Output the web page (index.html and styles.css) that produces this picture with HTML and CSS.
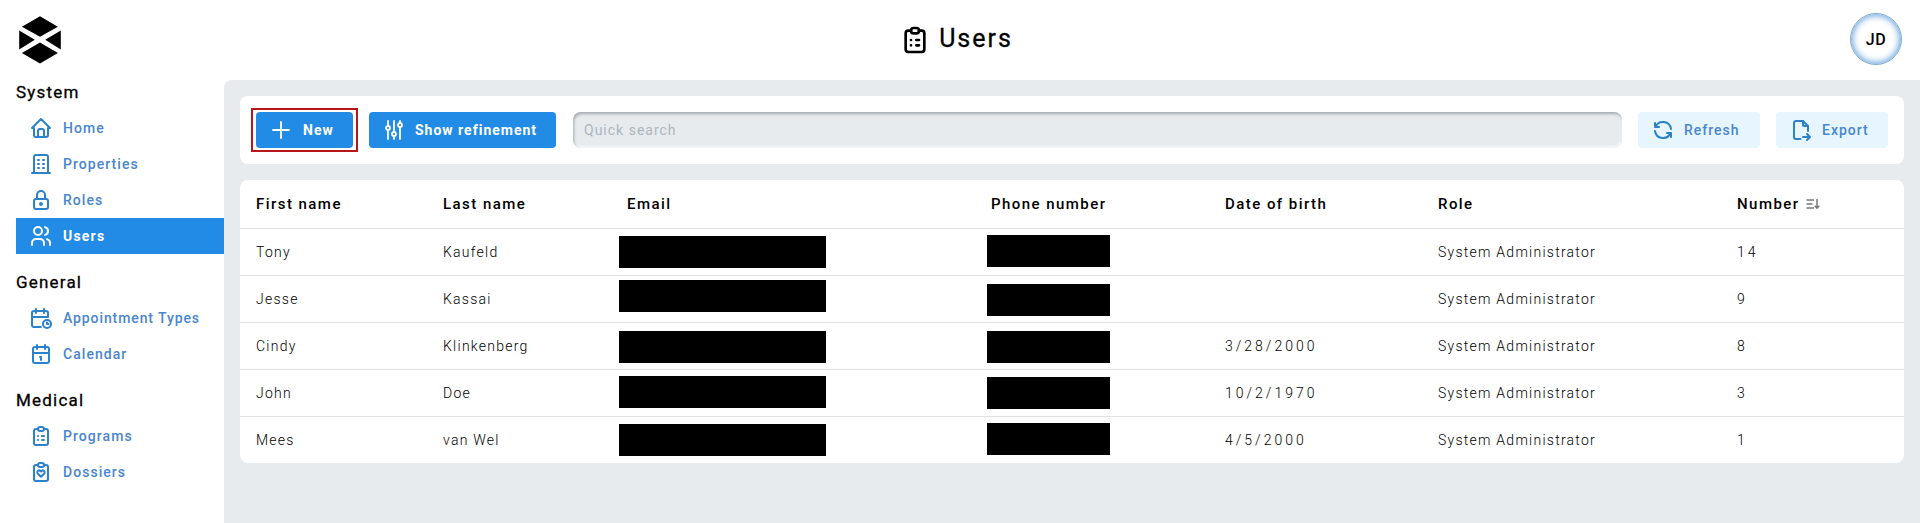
FILE: index.html
```html
<!DOCTYPE html>
<html lang="en">
<head>
<meta charset="utf-8">
<title>Users</title>
<link rel="stylesheet" href="styles.css">
</head>
<body>
<svg class="sprite" aria-hidden="true">
  <symbol id="clipboard" viewBox="0 0 24 24"><path d="M9 5H7a2 2 0 0 0-2 2v12a2 2 0 0 0 2 2h10a2 2 0 0 0 2-2V7a2 2 0 0 0-2-2h-2"/><rect x="9" y="3" width="6" height="4" rx="2"/></symbol>
</svg>
<header class="topbar">
  <svg class="logo" viewBox="0 0 42 48"><path d="M21 .3 38.900 10.700 21 20.800 2.900 10.700ZM21 26.500 38.900 37 21 47.500 2.900 37ZM.2 14.500 15.800 23.700 .2 33.500ZM41.800 14.500 26.200 23.700 41.800 33.500Z"/></svg>
  <h1 class="page-title">
    <svg class="icon icon-lg" viewBox="0 0 24 24"><use href="#clipboard"/><path d="M9 12h.01M13 12h2M9 16h.01M13 16h2"/></svg>
    <span>Users</span>
  </h1>
  <div class="avatar">JD</div>
</header>
<div class="shell">
  <nav class="sidebar">
    <section class="group">
      <h2 class="group-title">System</h2>
      <a class="item"><svg class="icon" viewBox="0 0 24 24"><path d="M5 12H3l9-9 9 9h-2M5 12v7a2 2 0 0 0 2 2h10a2 2 0 0 0 2-2v-7"/><path d="M9 21v-6a2 2 0 0 1 2-2h2a2 2 0 0 1 2 2v6"/></svg><span>Home</span></a>
      <a class="item"><svg class="icon" viewBox="0 0 24 24"><path d="M3 21h18M5 21V5a2 2 0 0 1 2-2h10a2 2 0 0 1 2 2v16M9 8h1M9 12h1M9 16h1M14 8h1M14 12h1M14 16h1"/></svg><span>Properties</span></a>
      <a class="item"><svg class="icon" viewBox="0 0 24 24"><rect x="5" y="11" width="14" height="10" rx="2"/><circle cx="12" cy="16" r="1"/><path d="M8 11V7a4 4 0 0 1 8 0v4"/></svg><span>Roles</span></a>
      <a class="item active"><svg class="icon" viewBox="0 0 24 24"><circle cx="9" cy="7" r="4"/><path d="M3 21v-2a4 4 0 0 1 4-4h4a4 4 0 0 1 4 4v2M16 3.130a4 4 0 0 1 0 7.750M21 21v-2a4 4 0 0 0-3-3.850"/></svg><span>Users</span></a>
    </section>
    <section class="group">
      <h2 class="group-title">General</h2>
      <a class="item wide"><svg class="icon" viewBox="0 0 24 24"><path d="M11.800 21H5a2 2 0 0 1-2-2V7a2 2 0 0 1 2-2h12a2 2 0 0 1 2 2v4M15 3v4M7 3v4M3 11h16"/><circle cx="18" cy="18" r="4"/><path d="M18 16.500V18h1.500"/></svg><span>Appointment Types</span></a>
      <a class="item"><svg class="icon" viewBox="0 0 24 24"><rect x="4" y="5" width="16" height="16" rx="2"/><path d="M16 3v4M8 3v4M4 11h16M11 15h1M12 15v3"/></svg><span>Calendar</span></a>
    </section>
    <section class="group">
      <h2 class="group-title">Medical</h2>
      <a class="item"><svg class="icon" viewBox="0 0 24 24"><use href="#clipboard"/><path d="M9 12h.01M13 12h2M9 16h.01M13 16h2"/></svg><span>Programs</span></a>
      <a class="item"><svg class="icon" viewBox="0 0 24 24"><use href="#clipboard"/><path d="m11.990 16.800 3.130-3.100a1.860 1.860 0 0 0 0-2.640 1.910 1.910 0 0 0-2.670-.01l-.45.450-.45-.45a1.910 1.910 0 0 0-2.670-.01 1.860 1.860 0 0 0-.01 2.650z"/></svg><span>Dossiers</span></a>
    </section>
  </nav>
  <main class="content">
    <div class="toolbar">
      <div class="highlight"><button class="btn primary new"><svg class="icon" viewBox="0 0 24 24"><path d="M12 4v16M4 12h16"/></svg><span>New</span></button></div>
      <button class="btn primary refine"><svg class="icon" viewBox="0 0 24 24"><circle cx="6" cy="10" r="2"/><path d="M6 3v5M6 12v9"/><circle cx="12" cy="16" r="2"/><path d="M12 3v11M12 18v3"/><circle cx="18" cy="7" r="2"/><path d="M18 3v2M18 9v12"/></svg><span>Show refinement</span></button>
      <input class="search" type="text" placeholder="Quick search">
      <button class="btn light refresh"><svg class="icon" viewBox="0 0 24 24"><path d="M20 11A8.100 8.100 0 0 0 4.500 9M4 5v4h4M4 13a8.100 8.100 0 0 0 15.500 2M20 19v-4h-4"/></svg><span>Refresh</span></button>
      <button class="btn light export"><svg class="icon" viewBox="0 0 24 24"><path d="M14 3v4a1 1 0 0 0 1 1h4"/><path d="M11.500 21H7a2 2 0 0 1-2-2V5a2 2 0 0 1 2-2h7l5 5v5M14 19h7M18 16l3 3-3 3"/></svg><span>Export</span></button>
    </div>
    <table class="users">
      <colgroup><col class="c-first"><col class="c-last"><col class="c-email"><col class="c-phone"><col class="c-birth"><col class="c-role"><col class="c-number"></colgroup>
      <thead><tr><th>First name</th><th>Last name</th><th>Email</th><th>Phone number</th><th>Date of birth</th><th>Role</th><th>Number<svg class="sort" viewBox="0 0 14 12"><path d="M0.500 2h7.500M0.500 6h6M0.500 10h7.500M11 1v9M8.700 7.800 11 10.200l2.300-2.400"/></svg></th></tr></thead>
      <tbody>
        <tr><td>Tony</td><td>Kaufeld</td><td><i class="mask email m1"></i></td><td><i class="mask phone m0"></i></td><td></td><td>System Administrator</td><td class="num">14</td></tr>
        <tr><td>Jesse</td><td>Kassai</td><td><i class="mask email up3"></i></td><td><i class="mask phone m2"></i></td><td></td><td>System Administrator</td><td class="num">9</td></tr>
        <tr><td>Cindy</td><td>Klinkenberg</td><td><i class="mask email m2"></i></td><td><i class="mask phone m2"></i></td><td class="num">3/28/2000</td><td>System Administrator</td><td class="num">8</td></tr>
        <tr><td>John</td><td>Doe</td><td><i class="mask email m0"></i></td><td><i class="mask phone m1"></i></td><td class="num">10/2/1970</td><td>System Administrator</td><td class="num">3</td></tr>
        <tr><td>Mees</td><td>van Wel</td><td><i class="mask email m1"></i></td><td><i class="mask phone m0"></i></td><td class="num">4/5/2000</td><td>System Administrator</td><td class="num">1</td></tr>
      </tbody>
    </table>
  </main>
</div>
</body>
</html>
```
FILE: styles.css
```css
* { box-sizing: border-box; }
body { margin: 0; height: 523px; overflow: hidden; background: #fff; color: #000; font-family: Roboto, "Liberation Sans", sans-serif; }
.sprite { display: none; }
.icon { width: 24px; height: 24px; flex: none; fill: none; stroke: currentColor; stroke-width: 2; stroke-linecap: round; stroke-linejoin: round; }
.icon-lg { width: 32px; height: 32px; }

.topbar { height: 80px; display: grid; grid-template-columns: 1fr auto 1fr; align-items: center; padding: 0 18px 0 19px; }
.logo { width: 42px; height: 48px; }
.page-title { margin: 0; padding-right: 9px; display: flex; align-items: center; gap: 8px; font-size: 25px; line-height: 32px; font-weight: 400; letter-spacing: 2px; -webkit-text-stroke: .3px #000; }
.page-title span { margin-top: -2px; }
.avatar { justify-self: end; width: 52px; height: 52px; margin-top: -2px; border-radius: 50%; border: 1px solid #7ca9d3; box-shadow: inset 0 0 7px 1px #5b9bd8; display: flex; align-items: center; justify-content: center; font-size: 16px; font-weight: 500; letter-spacing: .5px; }

.shell { display: flex; height: 443px; }
.sidebar { width: 224px; flex: none; margin-top: -6px; padding-left: 16px; display: flex; flex-direction: column; gap: 10px; }
.group-title { margin: 0; height: 36px; line-height: 36px; font-size: 17px; font-weight: 400; letter-spacing: 1.2px; -webkit-text-stroke: .3px #000; }
.item { height: 36px; display: flex; align-items: center; gap: 10px; padding-left: 13px; color: #4a86cd; font-size: 14px; font-weight: 500; letter-spacing: 1.05px; }
.item span, .btn span { padding-bottom: 1px; }
.item.wide { letter-spacing: .9px; }
.item .icon { color: #2b82cb; }
.item.active, .item.active .icon { color: #fff; }
.item.active { background: #228be6; font-weight: 700; letter-spacing: 1.2px; }

.content { flex: 1; background: #e7ebee; border-top-left-radius: 8px; padding: 16px; display: flex; flex-direction: column; gap: 16px; }
.toolbar { height: 68px; background: #fff; border-radius: 8px; padding: 0 16px 0 11px; display: flex; align-items: center; }
.highlight { border: 2px solid #b9151b; padding: 2px 3px; width: 107px; height: 44px; margin-right: 11px; }
.btn { height: 36px; border: 0; border-radius: 4px; padding: 0 0 0 13px; display: flex; align-items: center; font: 700 14px Roboto, sans-serif; letter-spacing: 1px; margin-right: 16px; flex: none; }
.primary { background: #228be6; color: #fff; }
.primary .icon { stroke-width: 1.800; }
.light { background: #e7f5ff; color: #4a86cd; font-weight: 500; }
.light .icon { color: #2b82cb; }
.new { width: 97px; gap: 10px; }
.refine { width: 187px; gap: 9px; }
.refresh { width: 122px; gap: 9px; }
.export { width: 112px; gap: 9px; padding-left: 13px; margin-right: 0; }
.search { flex: 1; min-width: 0; height: 36px; margin: 0 16px 0 1px; border: 0; border-radius: 8px; background: #e7ebee; padding: 0 11px 1px; outline: 0; font: 400 14px Roboto, sans-serif; letter-spacing: 1px; box-shadow: inset 1px 2px 3px #a5abb1, inset -1px -2px 2px #f6f8f9; }
.search::placeholder { color: #adb5bd; }

.users { width: 1664px; table-layout: fixed; border-spacing: 0; background: #fff; border-radius: 8px; }
.c-first { width: 187px; }
.c-last { width: 184px; }
.c-email { width: 364px; }
.c-phone { width: 234px; }
.c-birth { width: 213px; }
.c-role { width: 299px; }
.users th { height: 48px; padding: 0 0 0 16px; text-align: left; font-size: 15px; font-weight: 500; letter-spacing: 1.45px; }
.users td { height: 47px; padding: 0 0 1px 16px; border-top: 1px solid #dee2e6; font-size: 14px; font-weight: 300; letter-spacing: 1.25px; }
.users .num { letter-spacing: 3px; }
.sort { width: 14px; height: 12px; margin-left: 6px; vertical-align: -1px; fill: none; stroke: #777; stroke-width: 1.500; }
.mask { display: block; height: 32px; background: #000; transform: translateY(var(--shift, 0)); }
.email { width: 207px; margin-left: -8px; }
.phone { width: 123px; margin-left: -4px; }
.m0 { --shift: -1px; }
.m1 { --shift: 0px; }
.m2 { --shift: 1px; }
.up3 { --shift: -3px; }
```
